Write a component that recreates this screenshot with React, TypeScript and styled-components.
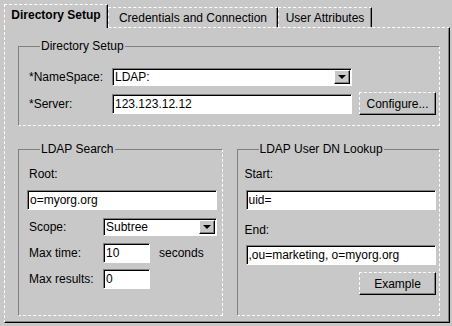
import React from 'react';
import styled, { createGlobalStyle } from 'styled-components';

// classic 3D palette
const face = '#c8c8c8';
const light = '#ffffff';
const shadow = '#808080';
const dark = '#000000';

const GlobalStyle = createGlobalStyle`
  body {
    margin: 0;
    background: ${face};
    font-family: "Liberation Sans", Arial, sans-serif;
    font-size: 12px;
    color: #000;
  }
`;

const Window = styled.div`
  width: 452px;
  height: 326px;
  box-sizing: border-box;
  padding: 4px 2px 3px 4px;
  display: flex;
  flex-direction: column;
`;

const TabStrip = styled.div`
  display: flex;
  align-items: flex-end;
  height: 23px;
  position: relative;
  z-index: 1;
`;

const Tab = styled.div<{ $active?: boolean; $width: number }>`
  box-sizing: border-box;
  width: ${(p) => p.$width}px;
  height: ${(p) => (p.$active ? 24 : 20)}px;
  margin-bottom: ${(p) => (p.$active ? -1 : 0)}px;
  background: ${face};
  border-top: 1px dashed ${light};
  border-left: 1px dashed ${light};
  border-right: 1px solid ${dark};
  box-shadow: inset -1px 0 0 ${shadow};
  display: flex;
  align-items: center;
  justify-content: center;
  padding-bottom: ${(p) => (p.$active ? 3 : 0)}px;
  font-weight: ${(p) => (p.$active ? 'bold' : 'normal')};
  font-size: 12px;
  white-space: nowrap;
`;

const Panel = styled.div`
  flex: 1;
  box-sizing: border-box;
  border-top: 1px dashed ${light};
  border-left: 1px dashed ${light};
  border-right: 1px solid ${dark};
  border-bottom: 1px solid ${dark};
  box-shadow: inset -1px -1px 0 ${shadow};
  padding: 11px 9px 0 13px;
  display: flex;
  flex-direction: column;
`;

const Group = styled.fieldset<{ $width?: number }>`
  box-sizing: border-box;
  margin: 0;
  min-width: 0;
  width: ${(p) => (p.$width ? `${p.$width}px` : 'auto')};
  border-top: 1px solid ${shadow};
  border-left: 1px solid ${shadow};
  border-right: 1px dashed ${light};
  border-bottom: 1px dashed ${light};
  padding: 0 0 0 10px;
`;

const Legend = styled.legend`
  margin-left: 11px;
  padding: 0 1px;
  line-height: 14px;
  font-size: 12px;
`;

const TopGroup = styled(Group)`
  height: 87px;
  padding-top: 15px;
`;

const FormGrid = styled.div<{ $label: number }>`
  display: grid;
  grid-template-columns: ${(p) => p.$label}px auto auto 1fr;
  align-items: center;
`;

const Label = styled.span`
  line-height: 14px;
  white-space: nowrap;
`;

const Sunken = styled.div<{ $width: number; $height?: number }>`
  box-sizing: border-box;
  width: ${(p) => p.$width}px;
  height: ${(p) => p.$height ?? 20}px;
  background: #fff;
  border-top: 1px solid ${shadow};
  border-left: 1px solid ${shadow};
  border-right: 1px dashed ${light};
  border-bottom: 1px dashed ${light};
  box-shadow: inset 1px 1px 0 ${dark};
  display: flex;
  align-items: center;
  padding-left: 2px;
  line-height: 14px;
  white-space: nowrap;
  overflow: hidden;
`;

const Combo = styled(Sunken)`
  padding-right: 1px;
  justify-content: space-between;
`;

const ArrowButton = styled.span`
  box-sizing: border-box;
  width: 16px;
  height: 14px;
  background: ${face};
  border-top: 1px solid ${light};
  border-left: 1px solid ${light};
  border-right: 1px solid ${dark};
  border-bottom: 1px solid ${dark};
  box-shadow: inset -1px -1px 0 ${shadow};
  display: flex;
  align-items: center;
  justify-content: center;
  &::after {
    content: '';
    border-left: 4px solid transparent;
    border-right: 4px solid transparent;
    border-top: 4px solid #000;
    margin-right: 1px;
  }
`;

const Button = styled.div`
  box-sizing: border-box;
  width: 77px;
  height: 23px;
  background: ${face};
  border-top: 1px dashed ${light};
  border-left: 1px dashed ${light};
  border-right: 1px solid ${dark};
  border-bottom: 1px solid ${dark};
  box-shadow: inset -1px -1px 0 ${shadow};
  display: flex;
  align-items: center;
  justify-content: center;
  line-height: 14px;
`;

const Row = styled.div<{ $gap?: number }>`
  display: flex;
  align-items: center;
  gap: ${(p) => p.$gap ?? 0}px;
`;

const BottomRow = styled.div`
  display: flex;
  gap: 14px;
  margin-top: 16px;
`;

const ColumnGroup = styled(Group)`
  height: 174px;
  padding-top: 11px;
  display: flex;
  flex-direction: column;
`;

const Stack = styled.div<{ $top?: number }>`
  display: flex;
  flex-direction: column;
  margin-top: ${(p) => p.$top ?? 0}px;
`;

const Combobox: React.FC<{ value: string; width: number; height?: number }> = ({ value, width, height }) => (
  <Combo $width={width} $height={height ?? 18}>
    <span>{value}</span>
    <ArrowButton />
  </Combo>
);

const App: React.FC = () => {
  return (
    <>
      <GlobalStyle />
      <Window>
        <TabStrip>
          <Tab $active $width={104}>Directory Setup</Tab>
          <Tab $width={170}>Credentials and Connection</Tab>
          <Tab $width={94}>User Attributes</Tab>
        </TabStrip>
        <Panel>
          <TopGroup>
            <Legend>Directory Setup</Legend>
            <FormGrid $label={83}>
              <Label>*NameSpace:</Label>
              <Combobox value="LDAP:" width={240} />
              <span />
              <span />
            </FormGrid>
            <FormGrid $label={83} style={{ marginTop: 6 }}>
              <Label>*Server:</Label>
              <Sunken $width={240}>123.123.12.12</Sunken>
              <Row style={{ marginLeft: 7 }}>
                <Button>Configure...</Button>
              </Row>
              <span />
            </FormGrid>
          </TopGroup>

          <BottomRow>
            <ColumnGroup $width={205}>
              <Legend>LDAP Search</Legend>
              <Label>Root:</Label>
              <Stack $top={9}>
                <Sunken $width={190} style={{ marginLeft: -2 }}>o=myorg.org</Sunken>
              </Stack>
              <Stack $top={8}>
                <FormGrid $label={74}>
                  <Label>Scope:</Label>
                  <Combobox value="Subtree" width={114} height={18} />
                  <span />
                  <span />
                </FormGrid>
                <FormGrid $label={74} style={{ marginTop: 7 }}>
                  <Label>Max time:</Label>
                  <Sunken $width={47}>10</Sunken>
                  <Label style={{ marginLeft: 9 }}>seconds</Label>
                  <span />
                </FormGrid>
                <FormGrid $label={74} style={{ marginTop: 6 }}>
                  <Label>Max results:</Label>
                  <Sunken $width={47}>0</Sunken>
                  <span />
                  <span />
                </FormGrid>
              </Stack>
            </ColumnGroup>

            <ColumnGroup $width={204}>
              <Legend>LDAP User DN Lookup</Legend>
              <Label style={{ marginLeft: -3 }}>Start:</Label>
              <Stack $top={9}>
                <Sunken $width={190} style={{ marginLeft: -2 }}>uid=</Sunken>
              </Stack>
              <Label style={{ marginLeft: -3, marginTop: 13 }}>End:</Label>
              <Stack $top={8}>
                <Sunken $width={190} style={{ marginLeft: -2 }}>,ou=marketing, o=myorg.org</Sunken>
              </Stack>
              <Row style={{ justifyContent: 'flex-end', marginTop: 7, marginRight: 3 }}>
                <Button>Example</Button>
              </Row>
            </ColumnGroup>
          </BottomRow>
        </Panel>
      </Window>
    </>
  );
};

export default App;
